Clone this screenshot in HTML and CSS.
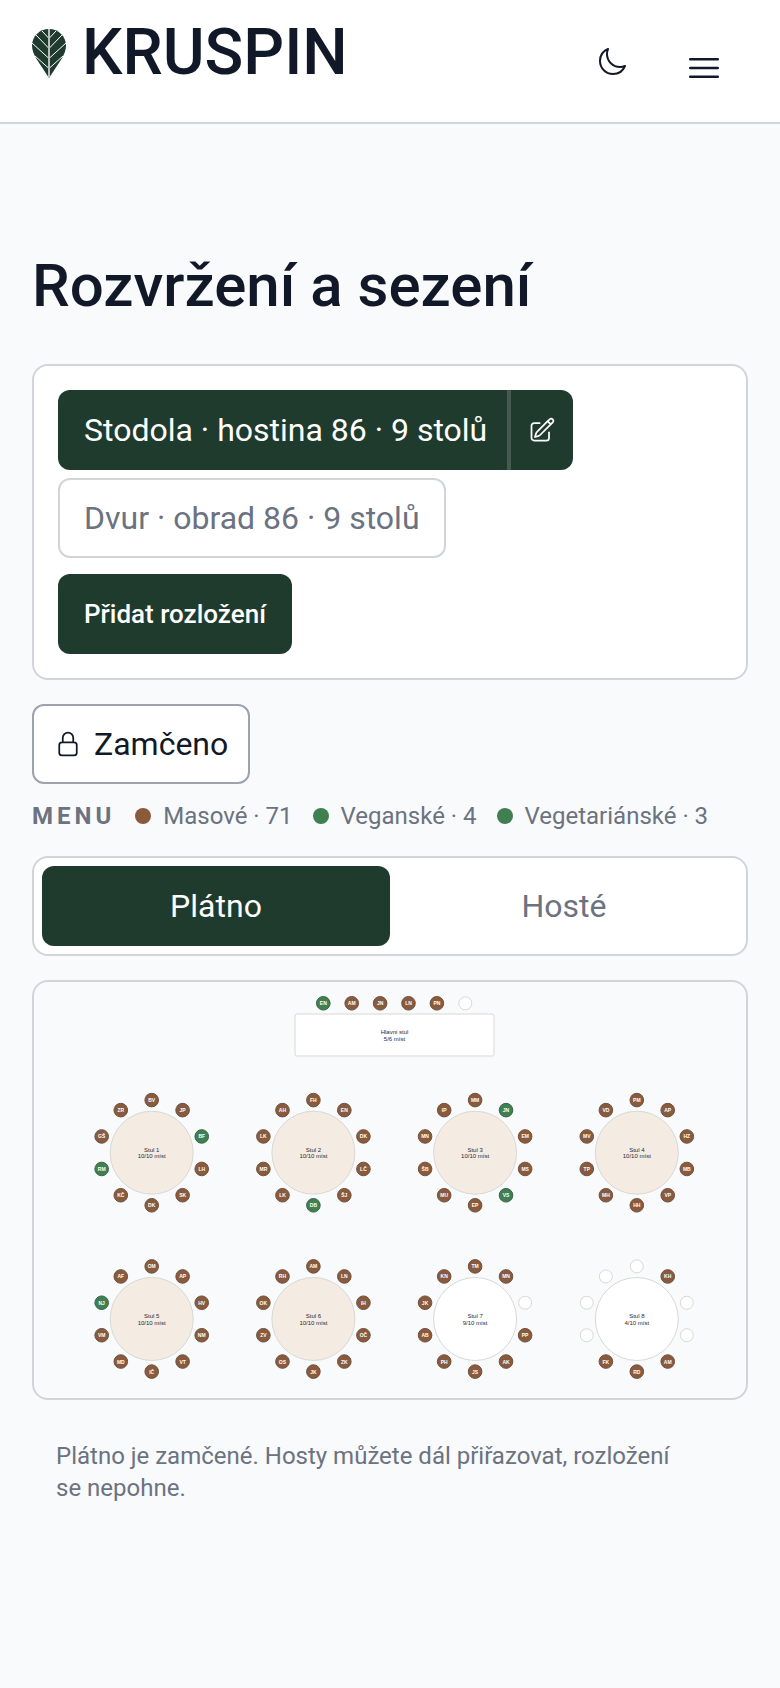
FILE: index.html
```
<!DOCTYPE html>
<html lang="cs">
<head>
<meta charset="UTF-8">
<meta name="viewport" content="width=device-width, initial-scale=1.0">
<title>Rozvržení a sezení</title>
<link rel="stylesheet" href="styles.css">
</head>
<body>
<header class="topbar">
    <a class="brand" href="#">
        <svg class="leaf" viewBox="0 0 34 49" aria-hidden="true">
            <path fill="#1f3b2e" d="M17 0C7.500 0 0 7.500 0 16.500C0 21.500 2 25.500 4.500 30L17 49L29.500 30C32 25.500 34 21.500 34 16.500C34 7.500 26.500 0 17 0Z"/>
            <path fill="none" stroke="#fff" stroke-width="1" d="M10 2L17 9.500L24 2M4 6L17 19.500L30 6M0 14L17 29.500L34 14M3 27L17 39.500L31 27"/>
            <path stroke="#b9bebb" stroke-width="2" d="M17 0V49"/>
        </svg>
        <span>KRUSPIN</span>
    </a>
    <div class="actions">
        <button class="icon-btn" aria-label="Tmavý režim">
            <svg class="icon" viewBox="0 0 24 24"><path d="M21.752 15.002A9.720 9.720 0 0 1 18 15.750c-5.385 0-9.750-4.365-9.750-9.750 0-1.330.266-2.597.748-3.752A9.753 9.753 0 0 0 3 11.250C3 16.635 7.365 21 12.750 21a9.753 9.753 0 0 0 9.002-5.998Z"/></svg>
        </button>
        <button class="icon-btn menu-btn" aria-label="Otevřít menu">
            <svg class="icon" viewBox="0 0 24 24"><path d="M3.750 6.750h16.500M3.750 12h16.500M3.750 17.250h16.500"/></svg>
        </button>
    </div>
</header>

<main>
    <h1>Rozvržení a sezení</h1>

    <section class="card layouts">
        <div class="layout-active">
            <button class="layout-name">Stodola · hostina 86 · 9 stolů</button>
            <button class="layout-edit" aria-label="Upravit rozložení">
                <svg class="icon" viewBox="0 0 24 24"><path d="m16.862 4.487 1.687-1.688a1.875 1.875 0 1 1 2.652 2.652L10.582 16.070a4.500 4.500 0 0 1-1.897 1.130L6 18l.8-2.685a4.500 4.500 0 0 1 1.130-1.897l8.932-8.931Zm0 0L19.500 7.125M18 14v4.750A2.250 2.250 0 0 1 15.750 21H5.250A2.250 2.250 0 0 1 3 18.750V8.250A2.250 2.250 0 0 1 5.250 6H10"/></svg>
            </button>
        </div>
        <button class="layout-other">Dvur · obrad 86 · 9 stolů</button>
        <button class="add-btn">Přidat rozložení</button>
    </section>

    <button class="lock-btn">
        <svg class="icon" viewBox="0 0 24 24" aria-hidden="true"><path d="M16.500 10.500V6.750a4.500 4.500 0 1 0-9 0v3.750m-.75 11.250h10.500a2.250 2.250 0 0 0 2.250-2.250v-6.750a2.250 2.250 0 0 0-2.250-2.250H6.750a2.250 2.250 0 0 0-2.250 2.250v6.750a2.250 2.250 0 0 0 2.250 2.250Z"/></svg>
        Zamčeno
    </button>

    <div class="legend">
        <span class="legend-title">MENU</span>
        <span class="legend-item"><i class="dot meat"></i>Masové · 71</span>
        <span class="legend-item"><i class="dot vegan"></i>Veganské · 4</span>
        <span class="legend-item"><i class="dot vegan"></i>Vegetariánské · 3</span>
    </div>

    <div class="card tabs">
        <button class="tab active">Plátno</button>
        <button class="tab">Hosté</button>
    </div>

    <div class="card canvas">
        <svg id="plan" viewBox="0 0 712 416" role="img" aria-label="Plán sezení"></svg>
    </div>

    <p class="note">Plátno je zamčené. Hosty můžete dál přiřazovat, rozložení se nepohne.</p>
</main>

<script src="script.js"></script>
</body>
</html>
```
FILE: styles.css
```
* {
    box-sizing: border-box;
}

body {
    margin: 0;
    background: #f9fafc;
    color: #111827;
    font-family: Roboto, "Liberation Sans", sans-serif;
    font-size: 32px;
    line-height: 40px;
}

button {
    margin: 0;
    padding: 0;
    border: none;
    background: none;
    color: inherit;
    font: inherit;
    cursor: pointer;
}

.icon {
    display: block;
    width: 28px;
    height: 28px;
    fill: none;
    stroke: currentColor;
    stroke-width: 1.5;
    stroke-linecap: round;
    stroke-linejoin: round;
}

/* header */
.topbar {
    display: flex;
    justify-content: space-between;
    align-items: flex-start;
    height: 124px;
    padding: 20px 32px 0;
    background: #fff;
    border-bottom: 2px solid #d1d5db;
}

.brand {
    display: flex;
    align-items: center;
    gap: 16px;
    color: #111827;
    font-size: 64px;
    font-weight: 500;
    line-height: 66px;
    text-decoration: none;
}

.leaf {
    width: 34px;
    height: 49px;
}

.actions {
    display: flex;
    align-items: flex-start;
    gap: 8px;
}

.icon-btn {
    display: grid;
    place-items: center;
    width: 80px;
    height: 84px;
}

.icon-btn .icon {
    width: 32px;
    height: 32px;
}

.menu-btn {
    width: 88px;
    height: 96px;
}

.menu-btn .icon {
    width: 40px;
    height: 40px;
}

/* content */
main {
    padding: 124px 32px 64px;
}

h1 {
    margin: 0 0 40px;
    font-size: 60px;
    font-weight: 500;
    line-height: 76px;
}

.card {
    border: 2px solid #d1d5db;
    border-radius: 16px;
    background: #fff;
}

.layouts {
    display: flex;
    flex-direction: column;
    align-items: flex-start;
    padding: 24px;
}

.layout-active {
    display: flex;
    height: 80px;
    border-radius: 12px;
    background: #1f3b2e;
    color: #fff;
}

.layout-name {
    padding: 0 20px 0 26px;
}

.layout-edit {
    display: grid;
    place-items: center;
    width: 66px;
    border-left: 4px solid #475a52;
}

.layout-other {
    height: 80px;
    margin: 8px 0 16px;
    padding: 0 24px;
    border: 2px solid #d1d5db;
    border-radius: 12px;
    color: #6b7280;
}

.add-btn {
    height: 80px;
    padding: 0 26px;
    border-radius: 12px;
    background: #1f3b2e;
    color: #fff;
    font-size: 26px;
    font-weight: 500;
}

.lock-btn {
    display: flex;
    align-items: center;
    gap: 12px;
    height: 80px;
    margin-top: 24px;
    padding: 0 20px;
    border: 2px solid #9ca3af;
    border-radius: 12px;
    background: #fff;
}

.legend {
    display: flex;
    flex-wrap: wrap;
    align-items: center;
    gap: 20px;
    margin: 16px 0 24px;
    color: #6b7280;
    font-size: 24px;
    line-height: 32px;
}

.legend-title {
    font-weight: 700;
    letter-spacing: 4px;
}

.legend-item {
    display: flex;
    align-items: center;
    gap: 12px;
}

.dot {
    width: 16px;
    height: 16px;
    border-radius: 50%;
}

.dot.meat {
    background: #8a5a3c;
}

.dot.vegan {
    background: #3f7f50;
}

.tabs {
    display: grid;
    grid-template-columns: 1fr 1fr;
    padding: 8px;
}

.tab {
    height: 80px;
    border-radius: 12px;
    color: #6b7280;
}

.tab.active {
    background: #1f3b2e;
    color: #fff;
}

.canvas {
    margin-top: 24px;
    background: none;
}

#plan {
    display: block;
    width: 100%;
    font-family: "Liberation Sans", sans-serif;
    text-anchor: middle;
}

.table {
    fill: #fff;
    stroke: #d9d8d3;
}

.table.full {
    fill: #f4ece2;
}

.table-label {
    fill: #1f2937;
    font-size: 6px;
}

.seat {
    fill: #fff;
    stroke: #d9d8d3;
}

.seat.meat {
    fill: #8a5a3c;
    stroke: #6d5243;
}

.seat.vegan {
    fill: #3f7f50;
    stroke: #3a6549;
}

.seat-label {
    fill: #fff;
    font-size: 5px;
    font-weight: 700;
}

.note {
    margin: 40px 56px 0 24px;
    color: #6b7280;
    font-size: 24px;
    line-height: 32px;
}
```
FILE: script.js
```
// seats go clockwise from the top, "-" is a free seat, "*" marks a vegan / vegetarian guest
var tables = [
    { name: "Stul 1", seats: "BV JP *BF LH SK DK KČ *RM GŠ ZR" },
    { name: "Stul 2", seats: "FH EN DK LČ ŠJ *DB LK MR LK AH" },
    { name: "Stul 3", seats: "MM *JN EM MS *VS EP MU ŠB MN IP" },
    { name: "Stul 4", seats: "PM AP HZ MB VP HH MH TP MV VD" },
    { name: "Stul 5", seats: "OM AP HV NM VT IČ MD VM *NJ AF" },
    { name: "Stul 6", seats: "AM LN IH OČ ZK JK OS ZV OK RH" },
    { name: "Stul 7", seats: "TM MN - PP AK JS PH AB JK KN" },
    { name: "Stul 8", seats: "- KH - - AM RD FK - - -" }
];

var plan = document.getElementById("plan");

function add(tag, attrs, text) {
    var el = document.createElementNS("http://www.w3.org/2000/svg", tag);
    for (var key in attrs) {
        el.setAttribute(key, attrs[key]);
    }
    if (text) {
        el.textContent = text;
    }
    plan.appendChild(el);
}

function addSeat(x, y, guest) {
    var type = guest === "-" ? "" : guest[0] === "*" ? "vegan" : "meat";
    add("circle", { class: "seat " + type, cx: x, cy: y, r: type ? 6.8 : 6.5 });
    if (type) {
        add("text", { class: "seat-label", x: x, y: y + 2 }, guest.replace("*", ""));
    }
}

function addLabel(x, y, name, seats) {
    var taken = seats.filter(function(s) { return s !== "-"; }).length;
    add("text", { class: "table-label", x: x, y: y - 1 }, name);
    add("text", { class: "table-label", x: x, y: y + 5.5 }, taken + "/" + seats.length + " míst");
}

// head table
var headSeats = "*EN AM JN LN PN -".split(" ");
add("rect", { class: "table", x: 261, y: 32, width: 199, height: 42, rx: 2 });
headSeats.forEach(function(guest, i) {
    addSeat(289.3 + i * 28.4, 21.3, guest);
});
addLabel(360.5, 53, "Hlavni stul", headSeats);

// round tables, four in a row
tables.forEach(function(table, i) {
    var cx = 117.7 + (i % 4) * 161.7;
    var cy = i < 4 ? 170.7 : 337;
    var seats = table.seats.split(" ");
    var full = seats.indexOf("-") < 0;

    add("circle", { class: full ? "table full" : "table", cx: cx, cy: cy, r: 41.5 });
    seats.forEach(function(guest, n) {
        var angle = n * 2 * Math.PI / seats.length;
        addSeat(cx + 52.6 * Math.sin(angle), cy - 52.6 * Math.cos(angle), guest);
    });
    addLabel(cx, cy, table.name, seats);
});
```
